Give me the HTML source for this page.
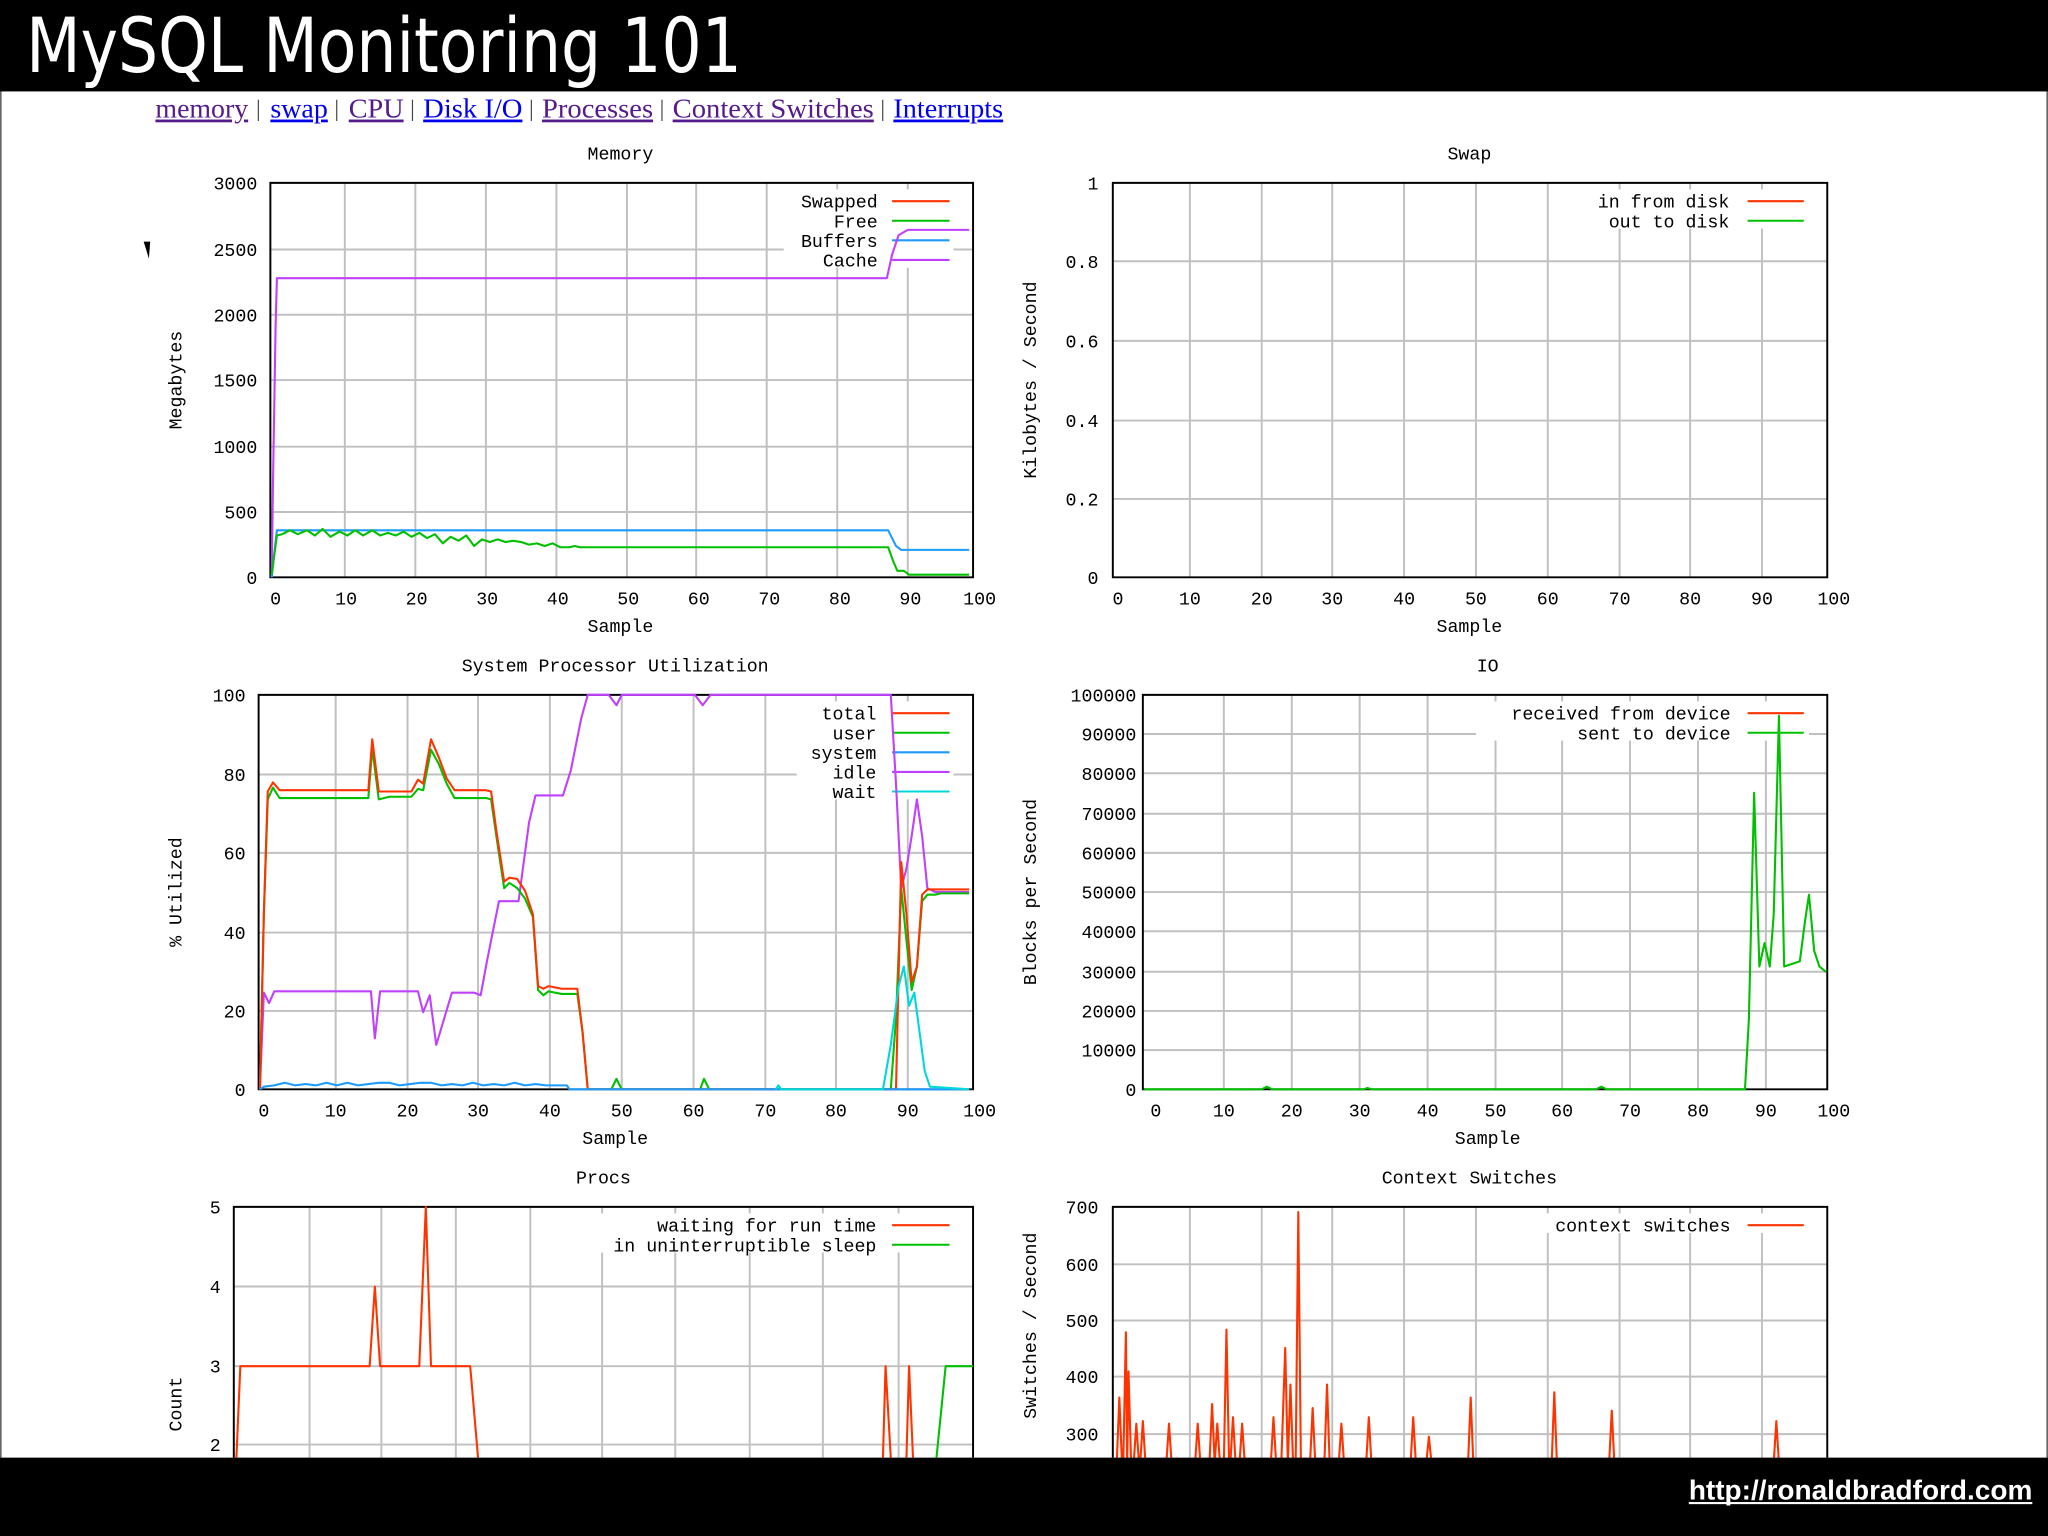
<!DOCTYPE html>
<html><head><meta charset="utf-8"><style>
html,body{margin:0;padding:0;background:#fff;}
svg{display:block;}
</style></head><body>
<svg width="2048" height="1536" viewBox="0 0 1568 1176" xmlns="http://www.w3.org/2000/svg">
<rect x="0" y="0" width="1568" height="1176" fill="#fff"/>
<rect x="0.5" y="0.5" width="1567" height="1175" fill="none" stroke="#666" stroke-width="1.5"/>
<rect x="0" y="0" width="1568" height="70" fill="#000"/>
<text x="20" y="55" font-family="DejaVu Sans, Liberation Sans, sans-serif" font-size="58" fill="#fff" textLength="548" lengthAdjust="spacingAndGlyphs">MySQL Monitoring 101</text>

<g font-family="Liberation Serif, serif" font-size="21">
<text x="119" y="90" fill="#551a8b" text-decoration="underline" textLength="71" lengthAdjust="spacingAndGlyphs">memory</text>
<text x="196" y="89" fill="#444" font-size="18">|</text>
<text x="207" y="90" fill="#0000ee" text-decoration="underline" textLength="44" lengthAdjust="spacingAndGlyphs">swap</text>
<text x="256" y="89" fill="#444" font-size="18">|</text>
<text x="267" y="90" fill="#551a8b" text-decoration="underline" textLength="42" lengthAdjust="spacingAndGlyphs">CPU</text>
<text x="314" y="89" fill="#444" font-size="18">|</text>
<text x="324" y="90" fill="#0000ee" text-decoration="underline" textLength="76" lengthAdjust="spacingAndGlyphs">Disk I/O</text>
<text x="405" y="89" fill="#444" font-size="18">|</text>
<text x="415" y="90" fill="#551a8b" text-decoration="underline" textLength="85" lengthAdjust="spacingAndGlyphs">Processes</text>
<text x="505" y="89" fill="#444" font-size="18">|</text>
<text x="515" y="90" fill="#551a8b" text-decoration="underline" textLength="154" lengthAdjust="spacingAndGlyphs">Context Switches</text>
<text x="674" y="89" fill="#444" font-size="18">|</text>
<text x="684" y="90" fill="#0000ee" text-decoration="underline" textLength="84" lengthAdjust="spacingAndGlyphs">Interrupts</text>
</g>
<path d="M110 185 L115 185 L114 198 Z" fill="#000"/>

<!-- grids -->
<g stroke="#c0c0c0" stroke-width="1.5" fill="none">
<path d="M264 140V442M318 140V442M372 140V442M426 140V442M480 140V442M533 140V442M587 140V442M641 140V442M695 140V442M207 191H745M207 241H745M207 291H745M207 342H745M207 392H745"/>
<path d="M911 140V442M966 140V442M1020 140V442M1075 140V442M1130 140V442M1185 140V442M1240 140V442M1294 140V442M1349 140V442M852 200H1399M852 261H1399M852 322H1399M852 382H1399"/>
<path d="M257 532V834M312 532V834M366 532V834M421 532V834M476 532V834M531 532V834M586 532V834M640 532V834M695 532V834M198 593H745M198 653H745M198 714H745M198 774H745"/>
<path d="M937 532V834M989 532V834M1041 532V834M1093 532V834M1145 532V834M1196 532V834M1248 532V834M1300 532V834M1352 532V834M875 562H1399M875 592H1399M875 623H1399M875 653H1399M875 683H1399M875 713H1399M875 744H1399M875 774H1399M875 804H1399"/>
<path d="M237 924V1116M292 924V1116M349 924V1116M406 924V1116M461 924V1116M517 924V1116M574 924V1116M630 924V1116M688 924V1116M179 985H745M179 1046H745M179 1106H745"/>
<path d="M911 924V1116M966 924V1116M1020 924V1116M1075 924V1116M1130 924V1116M1185 924V1116M1240 924V1116M1294 924V1116M1349 924V1116M852 968H1399M852 1011H1399M852 1054H1399M852 1098H1399"/>
</g>
<!-- legend backgrounds -->
<g fill="#fff">
<rect x="600" y="145" width="130" height="60"/>
<rect x="1205" y="145" width="180" height="30"/>
<rect x="610" y="537" width="120" height="75"/>
<rect x="1130" y="537" width="255" height="30"/>
<rect x="440" y="929" width="290" height="30"/>
<rect x="1170" y="929" width="215" height="15"/>
</g>
<!-- boxes -->
<g stroke="#000" stroke-width="1.5" fill="none">
<path d="M207 140H745V442H207Z"/>
<path d="M852 140H1399V442H852Z"/>
<path d="M198 532H745V834H198Z"/>
<path d="M875 532H1399V834H875Z"/>
<path d="M179 1116V924H745V1116"/>
<path d="M852 1116V924H1399V1116"/>
</g>

<g font-family="Liberation Mono, DejaVu Sans Mono, monospace" font-size="14" fill="#000">
<!-- Memory -->
<text x="475" y="122" text-anchor="middle">Memory</text>
<g text-anchor="end"><text x="197" y="145">3000</text><text x="197" y="196">2500</text><text x="197" y="246">2000</text><text x="197" y="296">1500</text><text x="197" y="347">1000</text><text x="197" y="397">500</text><text x="197" y="447">0</text></g>
<g text-anchor="middle"><text x="211" y="463">0</text><text x="265" y="463">10</text><text x="319" y="463">20</text><text x="373" y="463">30</text><text x="427" y="463">40</text><text x="481" y="463">50</text><text x="535" y="463">60</text><text x="589" y="463">70</text><text x="643" y="463">80</text><text x="697" y="463">90</text><text x="750" y="463">100</text>
<text x="475" y="484">Sample</text></g>
<text transform="translate(139,291) rotate(-90)" text-anchor="middle">Megabytes</text>
<g text-anchor="end"><text x="672" y="159">Swapped</text><text x="672" y="174">Free</text><text x="672" y="189">Buffers</text><text x="672" y="204">Cache</text></g>
<!-- Swap -->
<text x="1125" y="122" text-anchor="middle">Swap</text>
<g text-anchor="end"><text x="841" y="145">1</text><text x="841" y="205">0.8</text><text x="841" y="266">0.6</text><text x="841" y="327">0.4</text><text x="841" y="387">0.2</text><text x="841" y="447">0</text></g>
<g text-anchor="middle"><text x="856" y="463">0</text><text x="911" y="463">10</text><text x="966" y="463">20</text><text x="1020" y="463">30</text><text x="1075" y="463">40</text><text x="1130" y="463">50</text><text x="1185" y="463">60</text><text x="1240" y="463">70</text><text x="1294" y="463">80</text><text x="1349" y="463">90</text><text x="1404" y="463">100</text>
<text x="1125" y="484">Sample</text></g>
<text transform="translate(793,291) rotate(-90)" text-anchor="middle">Kilobytes / Second</text>
<g text-anchor="end"><text x="1324" y="159">in from disk</text><text x="1324" y="174">out to disk</text></g>
<!-- CPU -->
<text x="471" y="514" text-anchor="middle">System Processor Utilization</text>
<g text-anchor="end"><text x="188" y="537">100</text><text x="188" y="598">80</text><text x="188" y="658">60</text><text x="188" y="719">40</text><text x="188" y="779">20</text><text x="188" y="839">0</text></g>
<g text-anchor="middle"><text x="202" y="855">0</text><text x="257" y="855">10</text><text x="312" y="855">20</text><text x="366" y="855">30</text><text x="421" y="855">40</text><text x="476" y="855">50</text><text x="531" y="855">60</text><text x="586" y="855">70</text><text x="640" y="855">80</text><text x="695" y="855">90</text><text x="750" y="855">100</text>
<text x="471" y="876">Sample</text></g>
<text transform="translate(139,683) rotate(-90)" text-anchor="middle">% Utilized</text>
<g text-anchor="end"><text x="671" y="551">total</text><text x="671" y="566">user</text><text x="671" y="581">system</text><text x="671" y="596">idle</text><text x="671" y="611">wait</text></g>
<!-- IO -->
<text x="1139" y="514" text-anchor="middle">IO</text>
<g text-anchor="end"><text x="870" y="537">100000</text><text x="870" y="567">90000</text><text x="870" y="597">80000</text><text x="870" y="628">70000</text><text x="870" y="658">60000</text><text x="870" y="688">50000</text><text x="870" y="718">40000</text><text x="870" y="749">30000</text><text x="870" y="779">20000</text><text x="870" y="809">10000</text><text x="870" y="839">0</text></g>
<g text-anchor="middle"><text x="885" y="855">0</text><text x="937" y="855">10</text><text x="989" y="855">20</text><text x="1041" y="855">30</text><text x="1093" y="855">40</text><text x="1145" y="855">50</text><text x="1196" y="855">60</text><text x="1248" y="855">70</text><text x="1300" y="855">80</text><text x="1352" y="855">90</text><text x="1404" y="855">100</text>
<text x="1139" y="876">Sample</text></g>
<text transform="translate(793,683) rotate(-90)" text-anchor="middle">Blocks per Second</text>
<g text-anchor="end"><text x="1325" y="551">received from device</text><text x="1325" y="566">sent to device</text></g>
<!-- Procs -->
<text x="462" y="906" text-anchor="middle">Procs</text>
<g text-anchor="end"><text x="169" y="929">5</text><text x="169" y="990">4</text><text x="169" y="1051">3</text><text x="169" y="1111">2</text></g>
<text transform="translate(139,1075) rotate(-90)" text-anchor="middle">Count</text>
<g text-anchor="end"><text x="671" y="943">waiting for run time</text><text x="671" y="958">in uninterruptible sleep</text></g>
<!-- CS -->
<text x="1125" y="906" text-anchor="middle">Context Switches</text>
<g text-anchor="end"><text x="841" y="929">700</text><text x="841" y="973">600</text><text x="841" y="1016">500</text><text x="841" y="1059">400</text><text x="841" y="1103">300</text></g>
<text transform="translate(793,1015) rotate(-90)" text-anchor="middle">Switches / Second</text>
<g text-anchor="end"><text x="1325" y="943">context switches</text></g>
</g>

<!-- legend lines -->
<g stroke-width="1.6" fill="none">
<path d="M683 154H727" stroke="#ff3300"/><path d="M683 169H727" stroke="#00c000"/><path d="M683 184H727" stroke="#1e9bff"/><path d="M683 199H727" stroke="#c040ff"/>
<path d="M1338 154H1381" stroke="#ff3300"/><path d="M1338 169H1381" stroke="#00c000"/>
<path d="M683 546H727" stroke="#ff3300"/><path d="M683 561H727" stroke="#00c000"/><path d="M683 576H727" stroke="#1e9bff"/><path d="M683 591H727" stroke="#c040ff"/><path d="M683 606H727" stroke="#00d8d8"/>
<path d="M1338 546H1381" stroke="#ff3300"/><path d="M1338 561H1381" stroke="#00c000"/>
<path d="M683 938H727" stroke="#ff3300"/><path d="M683 953H727" stroke="#00c000"/>
<path d="M1338 938H1381" stroke="#ff3300"/>
</g>

<!-- data -->
<g stroke-width="1.6" fill="none" stroke-linejoin="round">
<!-- memory -->
<path stroke="#c040ff" d="M208 442L209 370L211 250L212 213H679L683 195L688 180L695 176H742"/>
<path stroke="#1e9bff" d="M208 442L212 406H680L686 418L690 421H742"/>
<path stroke="#00c000" d="M208 440L212 410L216 409L222 406L228 409L235 406L241 410L247 405L253 411L260 407L266 410L272 406L278 410L285 406L291 410L297 408L303 410L309 407L315 411L321 408L327 412L333 409L339 416L345 411L351 414L357 410L363 418L369 413L375 415L381 413L387 415L393 414L399 415L405 417L411 416L417 418L423 416L429 419H436L440 418L444 419H680L684 430L687 437H692L696 440H742"/>
<!-- cpu -->
<path stroke="#c040ff" d="M199 834L202 760L206 768L210 759H284L287 795L291 759H320L324 775L329 762L334 800L340 780L346 760H363L368 762L373 735L382 690H397L405 630L410 609H431L437 590L445 550L450 532H466L472 540L476 532H532L538 540L544 532H682L686 600L690 680L694 665L698 640L702 612L706 640L710 680L716 683H742"/>
<path stroke="#00c000" d="M199 834L202 700L205 612L209 603L214 611H282L285 573L290 612L298 610H315L320 604L324 605L330 574L336 585L342 600L348 611H372L376 612L380 640L386 680L390 676L396 680L402 688L408 702L412 758L416 762L420 759L430 761H442L446 790L450 834H468L472 826L476 834H536L539 826L543 834H682L686 780L690 680L694 720L698 758L702 740L706 690L710 685L716 685L720 684L742 684"/>
<path stroke="#ff3300" d="M199 834L202 700L205 606L209 599L214 605H282L285 566L290 606L298 606H315L320 597L324 600L330 566L336 580L342 596L348 605H372L376 606L380 636L386 675L390 672L396 673L402 682L408 700L412 755L416 757L420 755L430 757H442L446 790L450 834H686L690 660L694 700L698 752L702 740L706 685L710 681L742 681"/>
<path stroke="#1e9bff" d="M199 834L202 832L210 831L218 829L226 831L234 830L242 831L250 829L258 831L266 829L274 831L282 830L290 829L298 829L306 831L314 830L322 829L330 829L338 831L346 830L354 831L362 829L370 831L378 830L386 831L394 829L402 831L410 830L418 831H434L436 834H742"/>
<path stroke="#00d8d8" d="M594 834L596 831L598 834H676L682 800L688 755L692 740L696 770L700 760L704 790L708 820L712 832L742 834"/>
<!-- io -->
<path stroke="#00c000" d="M876 834H966L970 832L974 834H1044L1047 833L1050 834H1222L1226 832L1230 834H1336L1339 780L1343 607L1347 740L1351 722L1355 740L1358 700L1362 548L1366 740L1372 738L1378 736L1382 705L1385 685L1389 728L1393 740L1398 744"/>
<!-- procs -->
<path stroke="#ff3300" d="M181 1116L184 1046H283L287 985L291 1046H321L326 924L330 1046H360L366 1116M676 1116L678 1046L682 1116M694 1116L696 1046L699 1116"/>
<path stroke="#00c000" d="M717 1116L724 1046H745"/>
<!-- cs -->
<path stroke="#ff3300" d="M855 1120L857 1070L859 1120M860 1120L862 1020L863 1120M863 1120L864 1050L866 1120M868 1120L870 1090L872 1120M873 1120L875 1088L877 1120M893 1120L895 1090L897 1120M915 1120L917 1090L919 1120M926 1120L928 1075L930 1120M930 1120L932 1090L934 1120M937 1120L939 1018L941 1120M942 1120L944 1085L946 1120M949 1120L951 1090L953 1120M973 1120L975 1085L977 1120M981 1120L984 1032L986 1120M986 1120L988 1060L990 1120M992 1120L994 928L996 1120M1003 1120L1005 1078L1007 1120M1014 1120L1016 1060L1018 1120M1025 1120L1027 1090L1029 1120M1046 1120L1048 1085L1050 1120M1080 1120L1082 1085L1084 1120M1092 1120L1094 1100L1096 1120M1124 1120L1126 1070L1128 1120M1188 1120L1190 1066L1192 1120M1232 1120L1234 1080L1236 1120M1358 1120L1360 1088L1362 1120"/>
</g>

<rect x="0" y="1116" width="1568" height="60" fill="#000"/>
<text x="1293" y="1148" font-family="Liberation Sans, Arial, sans-serif" font-weight="bold" font-size="21" fill="#fff" textLength="263" lengthAdjust="spacingAndGlyphs">http://ronaldbradford.com</text>
<rect x="1293" y="1150" width="263" height="1.6" fill="#fff"/>
</svg>
</body></html>
